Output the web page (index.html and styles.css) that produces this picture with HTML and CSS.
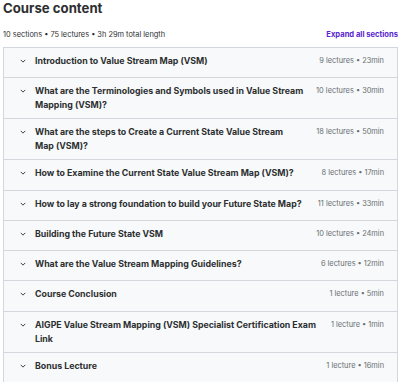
FILE: index.html
```html
<!doctype html>
<html lang="en">

<head>
  <meta charset="utf-8" />
  <meta name="viewport" content="width=device-width, initial-scale=1.0" />
  <link rel="stylesheet" href="styles.css">
</head>

<body>
  <div class="course">
    <h2>Course content</h2>
    <div class="summary">
      <span>10 sections • 75 lectures • 3h 29m total length</span>
      <a class="expand">Expand all sections</a>
    </div>

    <div class="sections">
      <div class="section">
        <svg class="chevron" viewBox="0 0 8 5"><polyline points="1,1 4,4 7,1" /></svg>
        <span class="title">Introduction to Value Stream Map (VSM)</span>
        <span class="meta">9 lectures • 23min</span>
      </div>
      <div class="section">
        <svg class="chevron" viewBox="0 0 8 5"><polyline points="1,1 4,4 7,1" /></svg>
        <span class="title">What are the Terminologies and Symbols used in Value Stream Mapping (VSM)?</span>
        <span class="meta">10 lectures • 30min</span>
      </div>
      <div class="section">
        <svg class="chevron" viewBox="0 0 8 5"><polyline points="1,1 4,4 7,1" /></svg>
        <span class="title">What are the steps to Create a Current State Value Stream Map&nbsp;(VSM)?</span>
        <span class="meta">18 lectures • 50min</span>
      </div>
      <div class="section">
        <svg class="chevron" viewBox="0 0 8 5"><polyline points="1,1 4,4 7,1" /></svg>
        <span class="title">How to Examine the Current State Value Stream Map (VSM)?</span>
        <span class="meta">8 lectures • 17min</span>
      </div>
      <div class="section">
        <svg class="chevron" viewBox="0 0 8 5"><polyline points="1,1 4,4 7,1" /></svg>
        <span class="title">How to lay a strong foundation to build your Future State Map?</span>
        <span class="meta">11 lectures • 33min</span>
      </div>
      <div class="section">
        <svg class="chevron" viewBox="0 0 8 5"><polyline points="1,1 4,4 7,1" /></svg>
        <span class="title">Building the Future State VSM</span>
        <span class="meta">10 lectures • 24min</span>
      </div>
      <div class="section">
        <svg class="chevron" viewBox="0 0 8 5"><polyline points="1,1 4,4 7,1" /></svg>
        <span class="title">What are the Value Stream Mapping Guidelines?</span>
        <span class="meta">6 lectures • 12min</span>
      </div>
      <div class="section">
        <svg class="chevron" viewBox="0 0 8 5"><polyline points="1,1 4,4 7,1" /></svg>
        <span class="title">Course Conclusion</span>
        <span class="meta">1 lecture • 5min</span>
      </div>
      <div class="section">
        <svg class="chevron" viewBox="0 0 8 5"><polyline points="1,1 4,4 7,1" /></svg>
        <span class="title">AIGPE Value Stream Mapping (VSM) Specialist Certification Exam Link</span>
        <span class="meta">1 lecture • 1min</span>
      </div>
      <div class="section">
        <svg class="chevron" viewBox="0 0 8 5"><polyline points="1,1 4,4 7,1" /></svg>
        <span class="title">Bonus Lecture</span>
        <span class="meta">1 lecture • 16min</span>
      </div>
    </div>
  </div>
</body>

</html>
```

FILE: styles.css
```css
:root {
  --text: #2d2f31;
  --muted: #6a6f73;
  --purple: #5624d0;
  --border: #d1d7dc;
  --row-bg: #f7f9fa;
}

body {
  margin: 0;
  background: #fff;
  font-family: 'Inter', 'Noto Sans', sans-serif;
  color: var(--text);
}

.course {
  padding: 0 2px 0 3px;
}

h2 {
  font-size: 13.2px;
  font-weight: 700;
  line-height: 17px;
  margin: 0;
}

.summary {
  display: flex;
  justify-content: space-between;
  align-items: center;
  font-size: 7.4px;
  line-height: 10px;
  margin-top: 13px;
  margin-bottom: 7px;
}

.expand {
  color: var(--purple);
  font-weight: 700;
  font-size: 7.6px;
}

.sections {
  border: 1px solid var(--border);
  border-bottom: none;
}

.section {
  display: flex;
  align-items: flex-start;
  min-height: 30.3px;
  box-sizing: border-box;
  padding: 6px 13px 6px 16px;
  background: var(--row-bg);
  border-bottom: 1px solid var(--border);
}

.chevron {
  flex: none;
  width: 6px;
  height: 4px;
  margin-top: 5px;
  margin-right: 9px;
  fill: none;
  stroke: var(--text);
  stroke-width: 1.2;
}

.title {
  flex: 1;
  font-size: 8.8px;
  font-weight: 700;
  line-height: 14px;
  max-width: 284px;
}

.meta {
  margin-left: auto;
  padding-left: 8px;
  font-size: 7.4px;
  line-height: 14px;
  color: var(--muted);
  white-space: nowrap;
}
```
